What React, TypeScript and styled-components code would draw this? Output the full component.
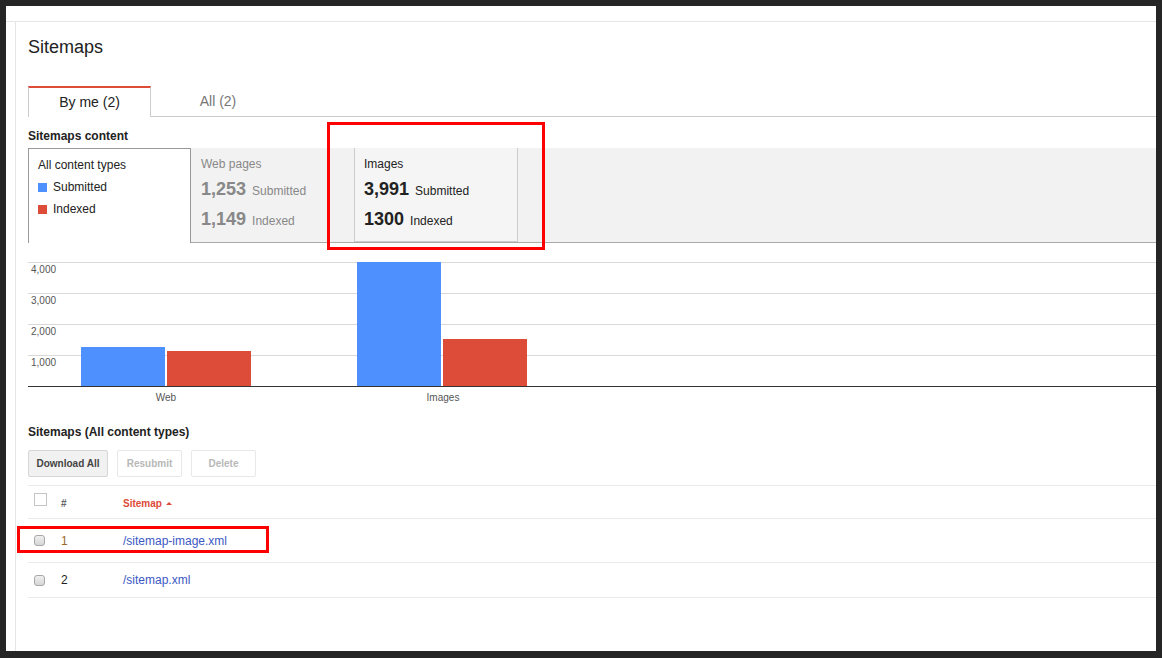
import React from 'react';
import styled, { createGlobalStyle } from 'styled-components';

const GlobalStyle = createGlobalStyle`
    html, body {
        margin: 0;
        padding: 0;
        background: #252525;
    }
    * {
        box-sizing: border-box;
    }
`;

const Frame = styled.div`
    position: relative;
    width: 1162px;
    height: 658px;
    padding: 6px 6px 7px 6px;
    font-family: 'Liberation Sans', Arial, sans-serif;
    color: #222;
`;

const Screen = styled.div`
    height: 100%;
    background: #fff;
    display: flex;
    flex-direction: column;
    overflow: hidden;
`;

const TopStrip = styled.div`
    height: 16px;
    border-bottom: 1px solid #e5e5e5;
`;

const Body = styled.div`
    flex: 1;
    display: flex;
    padding-left: 9px;
`;

const Panel = styled.div`
    flex: 1;
    border-left: 1px solid #e5e5e5;
    padding: 15px 0 0 12px;
`;

const Title = styled.h1`
    margin: 0;
    font-size: 18px;
    line-height: 20px;
    font-weight: normal;
    color: #222;
`;

const TabBar = styled.div`
    margin-top: 29px;
    display: flex;
    align-items: flex-end;
    border-bottom: 1px solid #ccc;
    height: 31px;
`;

const Tab = styled.div<{ $active?: boolean }>`
    width: ${(p) => (p.$active ? '123px' : '134px')};
    height: ${(p) => (p.$active ? '31px' : '30px')};
    margin-bottom: ${(p) => (p.$active ? '-1px' : '0')};
    padding-bottom: ${(p) => (p.$active ? '2px' : '0')};
    display: flex;
    align-items: center;
    justify-content: center;
    font-size: 14px;
    color: ${(p) => (p.$active ? '#222' : '#777')};
    background: #fff;
    border-top: ${(p) => (p.$active ? '2px solid #dd4b39' : 'none')};
    border-left: ${(p) => (p.$active ? '1px solid #ccc' : 'none')};
    border-right: ${(p) => (p.$active ? '1px solid #ccc' : 'none')};
`;

const SectionLabel = styled.div<{ $top: number }>`
    margin-top: ${(p) => p.$top}px;
    font-size: 12px;
    line-height: 14px;
    font-weight: bold;
    color: #222;
`;

const ContentRow = styled.div`
    margin-top: 5px;
    height: 95px;
    display: flex;
    background: #f2f2f2;
    border-bottom: 1px solid #aaa;
`;

const TypeBox = styled.div<{ $variant: 'all' | 'dim' | 'focus' }>`
    width: ${(p) => (p.$variant === 'focus' ? '164px' : '163px')};
    height: ${(p) => (p.$variant === 'all' ? '95px' : '94px')};
    padding: ${(p) => (p.$variant === 'dim' ? '9px 0 0 10px' : '9px 0 0 9px')};
    background: ${(p) => (p.$variant === 'all' ? '#fff' : p.$variant === 'focus' ? '#f5f5f5' : '#f2f2f2')};
    border-top: ${(p) => (p.$variant === 'all' ? '1px solid #999' : 'none')};
    border-bottom: ${(p) => (p.$variant === 'focus' ? '1px solid #ccc' : 'none')};
    border-left: ${(p) => (p.$variant === 'focus' ? '1px solid #ccc' : p.$variant === 'all' ? '1px solid #999' : 'none')};
    border-right: ${(p) => (p.$variant === 'focus' ? '1px solid #ccc' : p.$variant === 'all' ? '1px solid #999' : 'none')};
    color: ${(p) => (p.$variant === 'dim' ? '#888' : '#222')};
    position: relative;
    z-index: 1;
`;

const TypeName = styled.div`
    font-size: 12px;
    line-height: 14px;
`;

const Legend = styled.div`
    margin-top: 8px;
    display: flex;
    align-items: center;
    font-size: 12px;
    line-height: 14px;
    height: 14px;
    & + & {
        margin-top: 8px;
    }
`;

const Swatch = styled.span<{ $color: string }>`
    width: 9px;
    height: 9px;
    margin-right: 6px;
    background: ${(p) => p.$color};
`;

const Stat = styled.div<{ $first?: boolean }>`
    margin-top: ${(p) => (p.$first ? '8px' : '9px')};
    display: flex;
    align-items: baseline;
    height: 21px;
`;

const StatNum = styled.span`
    font-size: 18px;
    font-weight: bold;
    margin-right: 6px;
`;

const StatText = styled.span`
    font-size: 12px;
`;

const Chart = styled.svg`
    display: block;
    margin-top: 19px;
    width: 1128px;
    height: 145px;
`;

const ButtonRow = styled.div`
    margin-top: 11px;
    display: flex;
    gap: 9px;
`;

const Button = styled.button<{ $primary?: boolean }>`
    width: ${(p) => (p.$primary ? '80px' : '65px')};
    height: 27px;
    padding: 0;
    font-family: inherit;
    font-size: 10px;
    font-weight: bold;
    color: ${(p) => (p.$primary ? '#444' : '#b8b8b8')};
    background: ${(p) => (p.$primary ? '#f1f1f1' : '#fff')};
    border: 1px solid ${(p) => (p.$primary ? '#d6d6d6' : '#e8e8e8')};
    border-radius: 2px;
`;

const Table = styled.div`
    margin-top: 8px;
    border-top: 1px solid #ebebeb;
`;

const Row = styled.div<{ $h: number }>`
    display: grid;
    grid-template-columns: 33px 62px 1fr;
    align-items: center;
    height: ${(p) => p.$h}px;
    border-bottom: 1px solid #ebebeb;
`;

const HeadBox = styled.span`
    display: block;
    width: 13px;
    height: 13px;
    margin: -6px 0 0 6px;
    border: 1px solid #c4c4c4;
    background: #fff;
`;

const RowBox = styled.span`
    display: block;
    width: 11px;
    height: 11px;
    margin-left: 6px;
    border: 1px solid #a8a8a8;
    border-radius: 3px;
    background: linear-gradient(#f0f0f0, #d6d6d6);
`;

const HeadCell = styled.span<{ $sorted?: boolean }>`
    display: flex;
    align-items: center;
    font-size: 10px;
    font-weight: bold;
    color: ${(p) => (p.$sorted ? '#dd4b39' : '#666')};
    padding-top: 3px;
`;

const SortArrow = styled.span`
    margin-left: 4px;
    width: 0;
    height: 0;
    border-left: 3px solid transparent;
    border-right: 3px solid transparent;
    border-bottom: 3px solid #dd4b39;
`;

const Num = styled.span<{ $hot?: boolean }>`
    font-size: 12px;
    color: ${(p) => (p.$hot ? '#9a6a26' : '#222')};
`;

const Link = styled.a`
    font-size: 12px;
    color: #3b58c4;
    text-decoration: none;
`;

const Mark = styled.div<{ $x: number; $y: number; $w: number; $h: number }>`
    position: absolute;
    left: ${(p) => p.$x}px;
    top: ${(p) => p.$y}px;
    width: ${(p) => p.$w}px;
    height: ${(p) => p.$h}px;
    border: 3px solid #f00;
    pointer-events: none;
    z-index: 5;
`;

const grid = [0, 31, 62, 93];
const ticks = ['4,000', '3,000', '2,000', '1,000'];
const bars = [
    { x: 53, top: 85, color: '#4d90fe' },
    { x: 139, top: 89, color: '#dd4b39' },
    { x: 329, top: 0, color: '#4d90fe' },
    { x: 415, top: 77, color: '#dd4b39' },
];
const chartFont = 'Liberation Sans, Arial, sans-serif';

export default function App() {
    return (
        <Frame>
            <GlobalStyle />
            <Screen>
                <TopStrip />
                <Body>
                    <Panel>
                        <Title>Sitemaps</Title>
                        <TabBar>
                            <Tab $active>By me (2)</Tab>
                            <Tab>All (2)</Tab>
                        </TabBar>

                        <SectionLabel $top={12}>Sitemaps content</SectionLabel>
                        <ContentRow>
                            <TypeBox $variant='all'>
                                <TypeName>All content types</TypeName>
                                <Legend>
                                    <Swatch $color='#4d90fe' />
                                    Submitted
                                </Legend>
                                <Legend>
                                    <Swatch $color='#dd4b39' />
                                    Indexed
                                </Legend>
                            </TypeBox>
                            <TypeBox $variant='dim'>
                                <TypeName>Web pages</TypeName>
                                <Stat $first>
                                    <StatNum>1,253</StatNum>
                                    <StatText>Submitted</StatText>
                                </Stat>
                                <Stat>
                                    <StatNum>1,149</StatNum>
                                    <StatText>Indexed</StatText>
                                </Stat>
                            </TypeBox>
                            <TypeBox $variant='focus'>
                                <TypeName>Images</TypeName>
                                <Stat $first>
                                    <StatNum>3,991</StatNum>
                                    <StatText>Submitted</StatText>
                                </Stat>
                                <Stat>
                                    <StatNum>1300</StatNum>
                                    <StatText>Indexed</StatText>
                                </Stat>
                            </TypeBox>
                        </ContentRow>

                        <Chart viewBox='0 0 1128 145'>
                            {grid.map((y) => (
                                <line key={y} x1={0} x2={1128} y1={y + 0.5} y2={y + 0.5} stroke='#d9d9d9' strokeWidth={1} />
                            ))}
                            {ticks.map((t, i) => (
                                <text key={t} x={3} y={grid[i] + 11} fontSize={10} fill='#555' fontFamily={chartFont}>
                                    {t}
                                </text>
                            ))}
                            {bars.map((b) => (
                                <rect key={b.x} x={b.x} y={b.top} width={84} height={124 - b.top} fill={b.color} />
                            ))}
                            <line x1={0} x2={1128} y1={124.5} y2={124.5} stroke='#333' strokeWidth={1} />
                            <text x={138} y={139} fontSize={10} fill='#555' textAnchor='middle' fontFamily={chartFont}>
                                Web
                            </text>
                            <text x={415} y={139} fontSize={10} fill='#555' textAnchor='middle' fontFamily={chartFont}>
                                Images
                            </text>
                        </Chart>

                        <SectionLabel $top={18}>Sitemaps (All content types)</SectionLabel>
                        <ButtonRow>
                            <Button $primary>Download All</Button>
                            <Button>Resubmit</Button>
                            <Button>Delete</Button>
                        </ButtonRow>

                        <Table>
                            <Row $h={33}>
                                <HeadBox />
                                <HeadCell>#</HeadCell>
                                <HeadCell $sorted>
                                    Sitemap
                                    <SortArrow />
                                </HeadCell>
                            </Row>
                            <Row $h={44}>
                                <RowBox />
                                <Num $hot>1</Num>
                                <Link href='#'>/sitemap-image.xml</Link>
                            </Row>
                            <Row $h={35}>
                                <RowBox />
                                <Num>2</Num>
                                <Link href='#'>/sitemap.xml</Link>
                            </Row>
                        </Table>
                    </Panel>
                </Body>
            </Screen>
            <Mark $x={327} $y={122} $w={218} $h={128} />
            <Mark $x={17} $y={526} $w={252} $h={27} />
        </Frame>
    );
}
